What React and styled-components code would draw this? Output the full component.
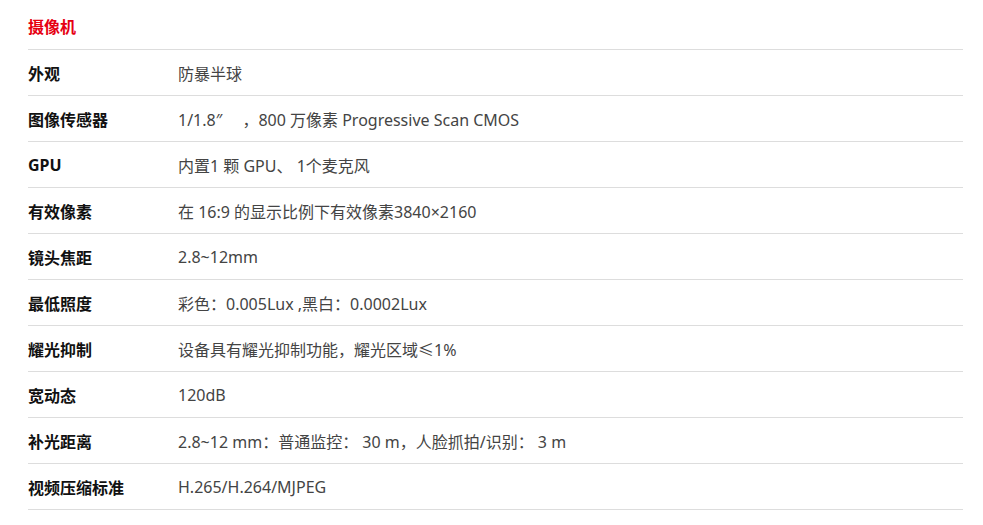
import React from 'react';
import styled, { createGlobalStyle } from 'styled-components';

const specs = [
  { label: '外观', value: '防暴半球' },
  { label: '图像传感器', value: '1/1.8″ \u3000，800 万像素 Progressive Scan CMOS' },
  { label: 'GPU', value: '内置1 颗 GPU、 1个麦克风' },
  { label: '有效像素', value: '在 16:9 的显示比例下有效像素3840×2160' },
  { label: '镜头焦距', value: '2.8~12mm' },
  { label: '最低照度', value: '彩色：0.005Lux ,黑白：0.0002Lux' },
  { label: '耀光抑制', value: '设备具有耀光抑制功能，耀光区域≤1%' },
  { label: '宽动态', value: '120dB' },
  { label: '补光距离', value: '2.8~12 mm：普通监控： 30 m，人脸抓拍/识别： 3 m' },
  { label: '视频压缩标准', value: 'H.265/H.264/MJPEG' },
];

const GlobalStyle = createGlobalStyle`
  body {
    margin: 0;
    background: #fff;
    font-family: "Noto Sans", "Noto Sans CJK SC", sans-serif;
  }
`;

const Wrapper = styled.div`
  width: 935px;
  padding-left: 28px;
`;

const Title = styled.h2`
  margin: 0;
  padding-top: 6px;
  height: 43px;
  line-height: 43px;
  font-size: 16px;
  font-weight: 700;
  color: #e60012;
  border-bottom: 1px solid #ddd;
`;

const Row = styled.div`
  display: flex;
  align-items: center;
  box-sizing: border-box;
  height: 46px;
  border-bottom: 1px solid #ddd;
`;

const Label = styled.div`
  width: 150px;
  flex-shrink: 0;
  font-size: 16px;
  font-weight: 700;
  color: #111;
`;

const Value = styled.div`
  font-size: 16px;
  color: #444;
  white-space: pre;
`;

export default function App() {
  return (
    <>
      <GlobalStyle />
      <Wrapper>
        <Title>摄像机</Title>
        {specs.map((s) => (
          <Row key={s.label}>
            <Label>{s.label}</Label>
            <Value>{s.value}</Value>
          </Row>
        ))}
      </Wrapper>
    </>
  );
}
